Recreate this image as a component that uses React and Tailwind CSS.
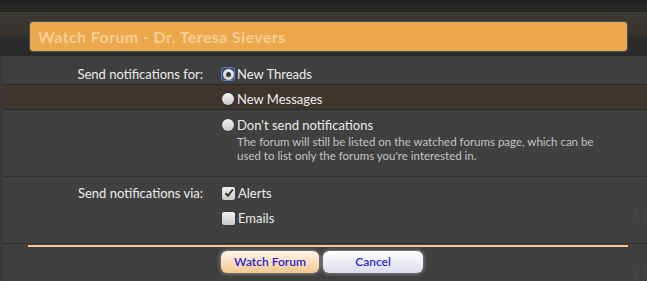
import React from "react";

function Radio({ checked }) {
  if (checked) {
    return (
      <span className="flex h-[14px] w-[14px] items-center justify-center rounded-[3px] border border-[#5b7fc4] bg-[#3c4a66]">
        <span className="flex h-[11px] w-[11px] items-center justify-center rounded-full bg-gradient-to-b from-[#f2f2f2] to-[#cfcfcf]">
          <span className="h-[5px] w-[5px] rounded-full bg-[#3a3a3a]" />
        </span>
      </span>
    );
  }
  return (
    <span className="flex h-[14px] w-[14px] items-center justify-center">
      <span className="h-[12px] w-[12px] rounded-full bg-gradient-to-b from-[#f4f4f4] to-[#c8c8c8] shadow-[0_0_1px_rgba(0,0,0,0.6)]" />
    </span>
  );
}

function Check({ checked }) {
  return (
    <span className="flex h-[13px] w-[13px] items-center justify-center rounded-[2px] bg-gradient-to-b from-[#f0f0f0] to-[#cacaca] shadow-[0_0_1px_rgba(0,0,0,0.7)]">
      {checked && (
        <svg width="10" height="10" viewBox="0 0 10 10">
          <path d="M1.5 5.2 L4 7.8 L8.8 1.5" fill="none" stroke="#333" strokeWidth="2" />
        </svg>
      )}
    </span>
  );
}

export default function App() {
  return (
    <div className="relative h-[281px] w-[647px] overflow-hidden bg-[#404040] font-['Lato','Open_Sans',sans-serif] text-[13px] text-[#ececec]">
      {/* page background behind the dialog */}
      <div className="absolute inset-0 flex flex-col">
        <div className="h-[4px] bg-[#1f1f1f]" />
        <div className="h-[8px] bg-[#262626]" />
        <div className="h-[25px] bg-gradient-to-b from-[#3c3a36] to-[#38302a]" />
        <div className="h-[19px] bg-[#2b2b2b]" />
        <div className="h-[28px] bg-[#3f3f3f]" />
        <div className="h-[1px] bg-[#2c2924]" />
        <div className="h-[24px] bg-[#3e352d]" />
        <div className="h-[1px] bg-[#2c2924]" />
        <div className="h-[66px] bg-[#404040]" />
        <div className="h-[1px] bg-[#35302a]" />
        <div className="h-[66px] bg-[#404040]" />
        <div className="h-[1px] bg-[#2e2d2b]" />
        <div className="flex-1 bg-[#404040]" />
      </div>
      <div className="absolute left-0 top-[56px] bottom-0 w-[3px] bg-[#393939]" />
      <div className="absolute left-[635px] top-[208px] h-[14px] w-[12px] border border-[#454545]" />
      <div className="absolute left-[635px] top-[266px] h-[14px] w-[12px] border border-[#454545]" />

      {/* dialog */}
      <div className="relative flex flex-col pt-[21px]">
        <div className="ml-[29px] mr-[19px] flex h-[31px] items-center rounded-[4px] border border-[#3e5060] bg-[#eca84c] pl-[8px] text-[16px] font-bold tracking-[0.4px] text-[#f7cf96]">
          Watch Forum - Dr. Teresa Sievers
        </div>

        <div className="mt-[14px] flex">
          <div className="w-[204px] pr-[1px] text-right leading-[16px]">Send notifications for:</div>
          <div className="ml-[17px] flex flex-col">
            <label className="flex h-[16px] items-center gap-[2px] leading-[16px]">
              <Radio checked />
              <span>New Threads</span>
            </label>
            <label className="mt-[9px] flex h-[16px] items-center gap-[2px] leading-[16px]">
              <Radio />
              <span>New Messages</span>
            </label>
            <label className="mt-[10px] flex h-[16px] items-center gap-[2px] leading-[16px]">
              <Radio />
              <span>Don't send notifications</span>
            </label>
            <p className="ml-[16px] mt-[2px] w-[364px] text-[11.5px] leading-[14px] text-[#c4c4c4]">
              The forum will still be listed on the watched forums page, which can be used to list only the forums you're interested in.
            </p>
          </div>
        </div>

        <div className="mt-[22px] flex">
          <div className="w-[204px] pr-[1px] text-right leading-[16px]">Send notifications via:</div>
          <div className="ml-[18px] flex flex-col">
            <label className="flex h-[16px] items-center gap-[3px] leading-[16px]">
              <Check checked />
              <span>Alerts</span>
            </label>
            <label className="mt-[9px] flex h-[16px] items-center gap-[3px] leading-[16px]">
              <Check />
              <span>Emails</span>
            </label>
          </div>
        </div>

        <div className="ml-[28px] mr-[19px] mt-[19px] h-[2px] bg-[#f0c890]" />

        <div className="mt-[4px] flex gap-[4px] pl-[221px]">
          <button className="h-[22px] w-[98px] rounded-[6px] bg-gradient-to-b from-[#fff6ea] to-[#f3c78e] text-[12px] font-semibold text-[#2a1fd8] shadow-[0_0_4px_rgba(255,255,255,0.55)]">
            Watch Forum
          </button>
          <button className="h-[22px] w-[100px] rounded-[6px] bg-gradient-to-b from-[#ffffff] to-[#dcdcee] text-[12px] font-semibold text-[#2a1fd8] shadow-[0_0_4px_rgba(255,255,255,0.55)]">
            Cancel
          </button>
        </div>
      </div>
    </div>
  );
}
